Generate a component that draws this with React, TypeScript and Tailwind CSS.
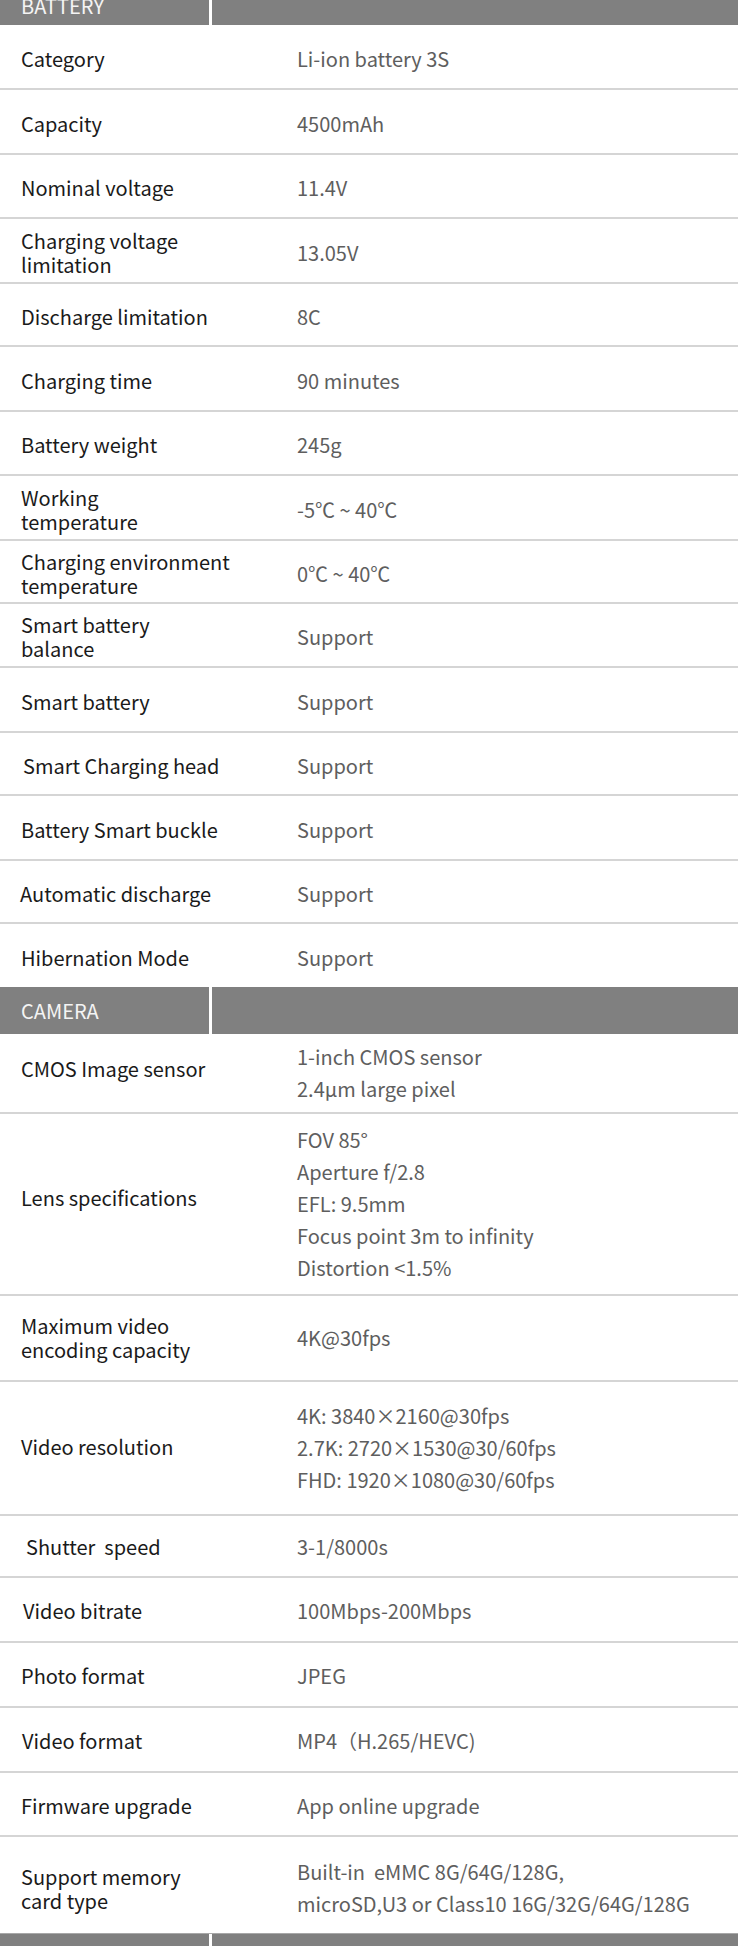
import React from "react";

type Row = { label: string[]; value: string[]; h: string; last?: boolean; pl?: string; lo?: string; pt?: string };

const battery: Row[] = [
  { label: ["Category"], value: ["Li-ion battery 3S"], h: "h-[65px]" },
  { label: ["Capacity"], value: ["4500mAh"], h: "h-[65px]" },
  { label: ["Nominal voltage"], value: ["11.4V"], h: "h-[64px]" },
  { label: ["Charging voltage", "limitation"], value: ["13.05V"], h: "h-[65px]" },
  { label: ["Discharge limitation"], value: ["8C"], h: "h-[63px]" },
  { label: ["Charging time"], value: ["90 minutes"], h: "h-[65px]" },
  { label: ["Battery weight"], value: ["245g"], h: "h-[64px]" },
  { label: ["Working", "temperature"], value: ["-5℃ ~ 40℃"], h: "h-[65px]" },
  { label: ["Charging environment", "temperature"], value: ["0℃ ~ 40℃"], h: "h-[63px]" },
  { label: ["Smart battery", "balance"], value: ["Support"], h: "h-[64px]" },
  { label: ["Smart battery"], value: ["Support"], h: "h-[65px]" },
  { label: ["Smart Charging head"], value: ["Support"], h: "h-[63px]", pl: "pl-[23px]" },
  { label: ["Battery Smart buckle"], value: ["Support"], h: "h-[65px]" },
  { label: ["Automatic discharge"], value: ["Support"], h: "h-[63px]", pl: "pl-[20px]" },
  { label: ["Hibernation Mode"], value: ["Support"], h: "h-[63px]", last: true },
];

const camera: Row[] = [
  {
    label: ["CMOS Image sensor"],
    value: ["1-inch CMOS sensor", "2.4μm large pixel"],
    h: "h-[80px]",
    lo: "-mt-[9px]",
    pt: "pt-0",
  },
  {
    label: ["Lens specifications"],
    value: ["FOV 85°", "Aperture f/2.8", "EFL: 9.5mm", "Focus point 3m to infinity", "Distortion <1.5%"],
    h: "h-[182px]",
    lo: "-mt-[12px]",
    pt: "pt-0",
  },
  { label: ["Maximum video", "encoding capacity"], value: ["4K@30fps"], h: "h-[86px]", pt: "pt-0" },
  {
    label: ["Video resolution"],
    value: ["4K: 3840×2160@30fps", "2.7K: 2720×1530@30/60fps", "FHD: 1920×1080@30/60fps"],
    h: "h-[134px]",
    lo: "-mt-[3px]",
    pt: "pt-0",
  },
  { label: ["Shutter  speed"], value: ["3-1/8000s"], h: "h-[62px]", pl: "pl-[26px]", pt: "pt-[2px]" },
  { label: ["Video bitrate"], value: ["100Mbps-200Mbps"], h: "h-[65px]", pl: "pl-[23px]", pt: "pt-[3px]" },
  { label: ["Photo format"], value: ["JPEG"], h: "h-[65px]", pt: "pt-[3px]" },
  { label: ["Video format"], value: ["MP4（H.265/HEVC)"], h: "h-[65px]", pl: "pl-[22px]", pt: "pt-[3px]" },
  { label: ["Firmware upgrade"], value: ["App online upgrade"], h: "h-[64px]", pt: "pt-[4px]" },
  {
    label: ["Support memory", "card type"],
    value: ["Built-in  eMMC 8G/64G/128G,", "microSD,U3 or Class10 16G/32G/64G/128G"],
    h: "h-[96px]",
    last: true,
    pt: "pt-[6px]",
    lo: "mt-[2px]",
  },
];

function Header({ title, className = "", tp = "" }: { title: string; className?: string; tp?: string }) {
  return (
    <div className={`flex h-[47px] shrink-0 ${className}`}>
      <div className={`w-[209px] bg-[#808080] flex items-center pl-[21px] ${tp} text-[20px] text-[#f4f4f4]`}>
        {title}
      </div>
      <div className="w-[3px] bg-white" />
      <div className="flex-1 bg-[#808080]" />
    </div>
  );
}

function SpecRow({ row }: { row: Row }) {
  return (
    <div
      className={`flex items-center shrink-0 ${row.h} ${row.pt ?? "pt-[4px]"} ${
        row.last ? "" : "border-b-2 border-[#d5d5d5]"
      }`}
    >
      <div
        className={`w-[297px] shrink-0 ${row.pl ?? "pl-[21px]"} ${row.lo ?? ""} text-[20px] leading-[24px] text-[#1a1a1a] whitespace-pre`}
      >
        {row.label.map((l, i) => (
          <div key={i}>{l}</div>
        ))}
      </div>
      <div className="flex-1 text-[20px] leading-[32px] text-[#5e5e5e] whitespace-pre">
        {row.value.map((v, i) => (
          <div key={i}>{v}</div>
        ))}
      </div>
    </div>
  );
}

export default function App() {
  return (
    <div className="w-[738px] h-[1946px] overflow-hidden bg-white font-['Noto_Sans_CJK_SC','Noto_Sans',sans-serif]">
      <div className="flex flex-col">
        <Header title="BATTERY" className="-mt-[22px]" tp="pt-[8px]" />
        {battery.map((r, i) => (
          <SpecRow key={i} row={r} />
        ))}
        <Header title="CAMERA" />
        {camera.map((r, i) => (
          <SpecRow key={i} row={r} />
        ))}
        <div className="h-[1px] bg-[#a8a8a8]" />
        <Header title="" />
      </div>
    </div>
  );
}
